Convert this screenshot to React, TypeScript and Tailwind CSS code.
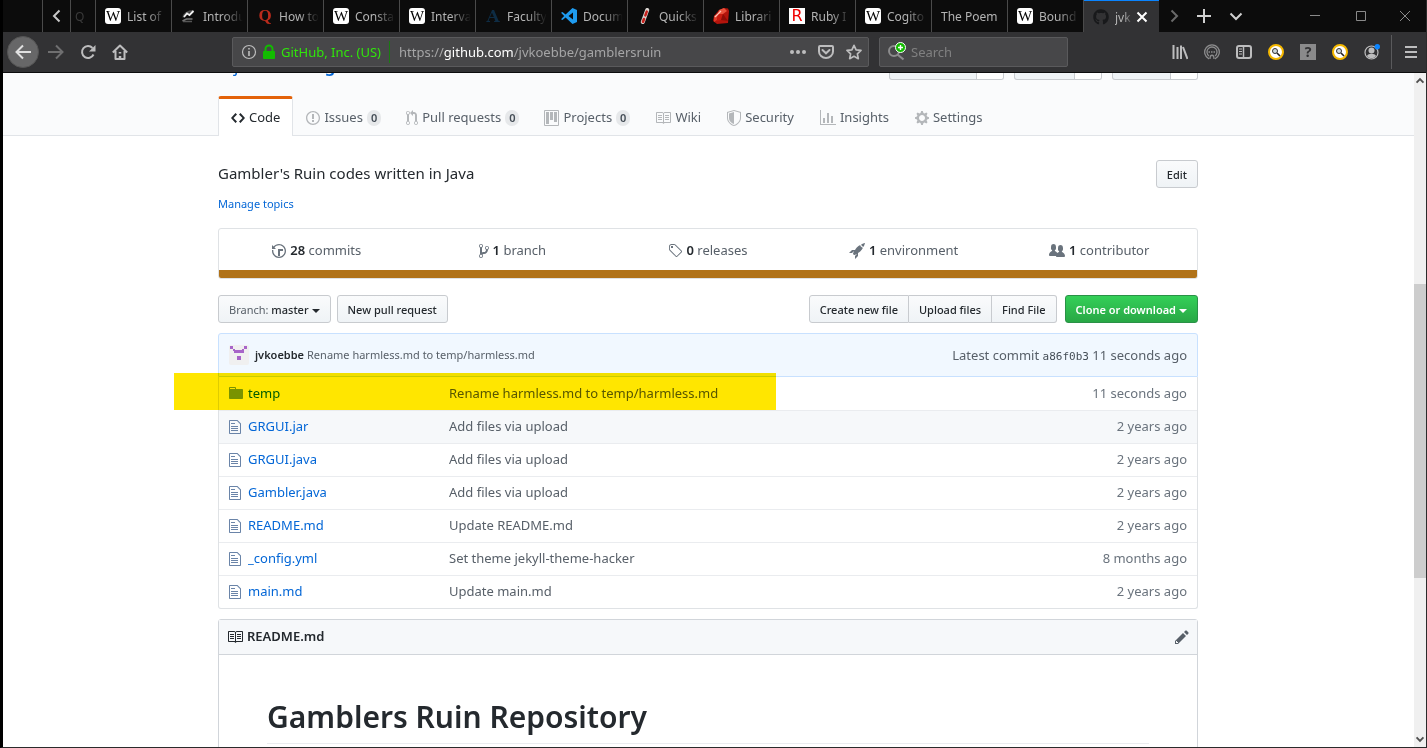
import React from 'react';
import { FaGithub } from 'react-icons/fa';

/* ---------- Octicons ---------- */

const octicons = {
  code: { w: 14, d: 'M9.5 3L8 4.5 11.5 8 8 11.5 9.5 13 14 8 9.5 3zm-5 0L0 8l4.5 5L6 11.5 2.5 8 6 4.5 4.5 3z' },
  issue: { w: 14, d: 'M7 2.3c3.14 0 5.7 2.56 5.7 5.7s-2.56 5.7-5.7 5.7A5.71 5.71 0 0 1 1.3 8c0-3.14 2.56-5.7 5.7-5.7zM7 1C3.14 1 0 4.14 0 8s3.14 7 7 7 7-3.14 7-7-3.14-7-7-7zm1 3H6v5h2V4zm0 6H6v2h2v-2z' },
  pull: { w: 12, d: 'M11 11.28V5c-.03-.78-.34-1.47-.94-2.06C9.46 2.35 8.78 2.03 8 2H7V0L4 3l3 3V4h1c.27.02.48.11.69.31.21.2.3.42.31.69v6.28A1.993 1.993 0 0 0 10 15a1.993 1.993 0 0 0 1-3.72zm-1 2.92c-.66 0-1.2-.55-1.2-1.2 0-.65.55-1.2 1.2-1.2.65 0 1.2.55 1.2 1.2 0 .65-.55 1.2-1.2 1.2zM4 3c0-1.11-.89-2-2-2a1.993 1.993 0 0 0-1 3.72v6.56A1.993 1.993 0 0 0 2 15a1.993 1.993 0 0 0 1-3.72V4.72c.59-.34 1-.98 1-1.72zm-.8 10c0 .66-.55 1.2-1.2 1.2-.65 0-1.2-.55-1.2-1.2 0-.65.55-1.2 1.2-1.2.65 0 1.2.55 1.2 1.2zM2 4.2C1.34 4.2.8 3.65.8 3c0-.65.55-1.2 1.2-1.2.65 0 1.2.55 1.2 1.2 0 .65-.55 1.2-1.2 1.2z' },
  project: { w: 15, d: 'M10 12h3V2h-3v10zm-4-2h3V2H6v8zm-4 4h3V2H2v12zm-1 1h13V1H1v14zM14 0H1a1 1 0 0 0-1 1v14a1 1 0 0 0 1 1h13a1 1 0 0 0 1-1V1a1 1 0 0 0-1-1z' },
  book: { w: 16, d: 'M3 5h4v1H3V5zm0 3h4V7H3v1zm0 2h4V9H3v1zm11-5h-4v1h4V5zm0 2h-4v1h4V7zm0 2h-4v1h4V9zm2-6v9c0 .55-.45 1-1 1H9.5l-1 1-1-1H2c-.55 0-1-.45-1-1V3c0-.55.45-1 1-1h5.5l1 1 1-1H15c.55 0 1 .45 1 1zm-8 .5L7.5 3H2v9h6V3.5zm7-.5H9.5l-.5.5V12h6V3z' },
  shield: { w: 14, d: 'M0 2l7-2 7 2v6.02C14 12.69 8.69 16 7 16c-1.69 0-7-3.31-7-7.98V2zm1 .75L7 1l6 1.75v5.268C13 12.104 8.449 15 7 15c-1.449 0-6-2.896-6-6.982V2.75zm1 .75L7 2v12c-1.207 0-5-2.482-5-5.985V3.5z' },
  graph: { w: 16, d: 'M16 14v1H0V0h1v14h15zM5 13H3V8h2v5zm4 0H7V3h2v10zm4 0h-2V6h2v7z' },
  gear: { w: 14, d: 'M14 8.77v-1.6l-1.94-.64-.45-1.09.88-1.84-1.13-1.13-1.81.91-1.09-.45-.69-1.92h-1.6l-.63 1.94-1.11.45-1.84-.88-1.13 1.13.91 1.81-.45 1.09L0 7.23v1.59l1.94.64.45 1.09-.88 1.84 1.13 1.13 1.81-.91 1.09.45.69 1.92h1.59l.63-1.94 1.11-.45 1.84.88 1.13-1.13-.92-1.81.47-1.09L14 8.75v.02zM7 11c-1.66 0-3-1.34-3-3s1.34-3 3-3 3 1.34 3 3-1.34 3-3 3z' },
  history: { w: 14, d: 'M8 13H6V6h5v2H8v5zM7 1C4.81 1 2.87 2.02 1.59 3.59L0 2v4h4L2.5 4.5C3.55 3.17 5.17 2.3 7 2.3c3.14 0 5.7 2.56 5.7 5.7s-2.56 5.7-5.7 5.7A5.71 5.71 0 0 1 1.3 8c0-.34.03-.67.09-1H.08C.03 7.33 0 7.66 0 8c0 3.86 3.14 7 7 7s7-3.14 7-7-3.14-7-7-7z' },
  branch: { w: 10, d: 'M10 5c0-1.11-.89-2-2-2a1.993 1.993 0 0 0-1 3.72v.3c-.02.52-.23.98-.63 1.38-.4.4-.86.61-1.38.63-.83.02-1.48.16-2 .45V4.72a1.993 1.993 0 0 0-1-3.72C.88 1 0 1.89 0 3a2 2 0 0 0 1 1.72v6.56c-.59.35-1 .99-1 1.72 0 1.11.89 2 2 2 1.11 0 2-.89 2-2 0-.53-.2-1-.53-1.36.09-.06.48-.41.59-.47.25-.11.56-.17.94-.17 1.05-.05 1.95-.45 2.75-1.25S8.95 7.77 9 6.73h-.02C9.59 6.37 10 5.73 10 5zM2 1.8c.66 0 1.2.55 1.2 1.2 0 .65-.55 1.2-1.2 1.2C1.35 4.2.8 3.65.8 3c0-.65.55-1.2 1.2-1.2zm0 12.41c-.66 0-1.2-.55-1.2-1.2 0-.65.55-1.2 1.2-1.2.65 0 1.2.55 1.2 1.2 0 .65-.55 1.2-1.2 1.2zm6-8c-.66 0-1.2-.55-1.2-1.2 0-.65.55-1.2 1.2-1.2.65 0 1.2.55 1.2 1.2 0 .65-.55 1.2-1.2 1.2z' },
  tag: { w: 14, d: 'M7.73 1.73C7.26 1.26 6.62 1 5.96 1H3.5C2.13 1 1 2.13 1 3.5v2.47c0 .66.27 1.3.73 1.77l6.06 6.06c.39.39 1.02.39 1.41 0l4.59-4.59a.996.996 0 0 0 0-1.41L7.73 1.73zM2.38 7.09c-.31-.3-.47-.7-.47-1.13V3.5c0-.88.72-1.59 1.59-1.59h2.47c.42 0 .83.16 1.13.47l6.14 6.13-4.73 4.73-6.13-6.15zM3.01 3h2v2H3V3h.01z' },
  rocket: { w: 16, d: 'M12.17 3.83c-.27-.27-.47-.55-.63-.88-.16-.31-.27-.66-.34-1.02-.58.33-1.16.7-1.73 1.13-.58.44-1.14.94-1.69 1.48-.7.7-1.33 1.81-1.78 2.45H3L0 10h3l2-2c-.34.77-1.02 2.98-1 3l1 1c.02.02 2.23-.64 3-1l-2 2v3l3-3v-3c.64-.45 1.75-1.09 2.45-1.78.55-.55 1.05-1.13 1.47-1.7.44-.58.81-1.16 1.14-1.72-.36-.08-.7-.19-1.03-.34a3.39 3.39 0 0 1-.86-.63zM16 0s-.09.38-.3 1.06c-.2.7-.55 1.58-1.06 2.66-.7-.08-1.27-.33-1.66-.72-.39-.39-.63-.94-.7-1.64C13.36.84 14.23.48 14.92.28 15.62.08 16 0 16 0z' },
  people: { w: 16, d: 'M16 12.999c0 .439-.45 1-1 1H7.995c-.539 0-.994-.447-.995-.999H1c-.54 0-1-.561-1-1 0-2.634 3-4 3-4s.229-.409 0-1c-.841-.621-1.058-.59-1-3 .058-2.419 1.367-3 2.5-3s2.442.58 2.5 3c.058 2.41-.159 2.379-1 3-.229.59 0 1 0 1s1.549.711 2.42 2.088C9.196 9.369 10 8.999 10 8.999s.229-.409 0-1c-.841-.62-1.058-.59-1-3 .058-2.419 1.367-3 2.5-3s2.437.581 2.495 3c.059 2.41-.158 2.38-1 3-.229.59 0 1 0 1s3.005 1.366 3.005 4' },
  file: { w: 12, d: 'M6 5H2V4h4v1zM2 8h7V7H2v1zm0 2h7V9H2v1zm0 2h7v-1H2v1zm10-7.5V14c0 .55-.45 1-1 1H1c-.55 0-1-.45-1-1V2c0-.55.45-1 1-1h7.5L12 4.5zM11 5L8 2H1v12h10V5z' },
  folder: { w: 14, d: 'M13 4H7V3c0-.66-.31-1-1-1H1c-.55 0-1 .45-1 1v10c0 .55.45 1 1 1h12c.55 0 1-.45 1-1V5c0-.55-.45-1-1-1zM6 4H1V3h5v1z' },
  pencil: { w: 14, d: 'M0 12v3h3l8-8-3-3-8 8zm3 2H1v-2h1v1h1v1zm10.3-9.3L12 6 9 3l1.3-1.3a.996.996 0 0 1 1.41 0l1.59 1.59c.39.39.39 1.02 0 1.41z' },
};
type OctName = keyof typeof octicons;

function Oct({ name, className = '' }: { name: OctName; className?: string }) {
  const { w, d } = octicons[name];
  return (
    <svg width={w} height={16} viewBox={`0 0 ${w} 16`} fill="currentColor" fillRule="evenodd" aria-hidden className={`shrink-0 ${className}`}>
      <path d={d} />
    </svg>
  );
}

/* ---------- Favicons ---------- */

function WikiIcon() {
  return (
    <span className="flex size-4 items-center justify-center overflow-hidden rounded-[3px] bg-white font-['Liberation_Serif',serif] text-[15px] leading-4 text-black">
      W
    </span>
  );
}

function LetterIcon({ letter, className }: { letter: string; className: string }) {
  return <span className={`flex size-4 items-center justify-center leading-4 ${className}`}>{letter}</span>;
}

function SketchIcon() {
  return (
    <svg width="16" height="16" viewBox="0 0 16 16" fill="none" aria-hidden>
      <path d="M2.500 9.500c0-3 4-6.500 10-6.500" stroke="#4c4c4c" strokeWidth="2" />
      <path d="M3 9l3-3.500 2.500 1.500 4-4" stroke="#f0f0f0" strokeWidth="1.800" />
      <path d="M1.500 13l4-2h6" stroke="#777" strokeWidth="1.600" />
      <path d="M2 13.500h9" stroke="#555" strokeWidth="1.500" />
    </svg>
  );
}

function VscodeIcon() {
  return (
    <svg width="16" height="16" viewBox="0 0 16 16" aria-hidden>
      <path d="M11.500 0L16 2v12l-4.500 2L4.600 9.600 1.500 12 0 11.300 3.200 8 0 4.700 1.500 4l3.100 2.400zM12 4.500L7.500 8l4.500 3.500z" fill="#1f9cf0" fillRule="evenodd" />
    </svg>
  );
}

function QuickIcon() {
  return (
    <svg width="16" height="16" viewBox="0 0 16 16" fill="none" strokeLinecap="round" aria-hidden>
      <path d="M10.200 2L5.800 14" stroke="#d9d4d0" strokeWidth="4" />
      <path d="M9.800 3.500L8.300 7.500" stroke="#c8201c" strokeWidth="2.400" />
      <path d="M7 11L6 13.700" stroke="#c8201c" strokeWidth="2.600" />
    </svg>
  );
}

function RubyIcon() {
  return (
    <svg width="16" height="16" viewBox="0 0 16 16" aria-hidden>
      <path d="M11 0l4 0.500 1 2.500-1 12-11 1-4-3 1-5 5-6z" fill="#b3140c" />
      <path d="M6 2l5-2 3 3-4 3-5 0z" fill="#e9513c" />
      <path d="M1 8l4-2-1 6-3 2z" fill="#e03a28" />
      <path d="M5 6l5 0-2 6-4 1z" fill="#c81c10" />
      <path d="M2 9l6-6" stroke="#ffc6b8" strokeWidth="1.200" />
      <path d="M10 6l5 7-7-1z" fill="#8e0c06" />
    </svg>
  );
}

const tabs: { icon: React.ReactNode; title: string }[] = [
  { icon: <WikiIcon />, title: 'List of' },
  { icon: <SketchIcon />, title: 'Introdu' },
  { icon: <LetterIcon letter="Q" className="font-['Liberation_Serif',serif] text-[17px] font-bold text-[#b92b1c]" />, title: 'How to' },
  { icon: <WikiIcon />, title: 'Consta' },
  { icon: <WikiIcon />, title: 'Interva' },
  { icon: <LetterIcon letter="A" className="font-['DejaVu_Serif',serif] text-[17px] font-bold text-[#0e2c44]" />, title: 'Faculty' },
  { icon: <VscodeIcon />, title: 'Docum' },
  { icon: <QuickIcon />, title: 'Quicks' },
  { icon: <RubyIcon />, title: 'Librari' },
  { icon: <LetterIcon letter="R" className="bg-white font-['DejaVu_Sans',sans-serif] text-[16px] text-[#f00000]" />, title: 'Ruby I' },
  { icon: <WikiIcon />, title: 'Cogito' },
  { icon: null, title: 'The Poem' },
  { icon: <WikiIcon />, title: 'Bound' },
];

const fade = '[mask-image:linear-gradient(to_right,black_50%,transparent)]';

function Line({ d, size = 16, width = 2, className = '' }: { d: string; size?: number; width?: number; className?: string }) {
  return (
    <svg width={size} height={size} viewBox="0 0 16 16" fill="none" stroke="currentColor" strokeWidth={width} className={`shrink-0 ${className}`} aria-hidden>
      <path d={d} />
    </svg>
  );
}

function TabStrip() {
  return (
    <div className="flex h-8 shrink-0 bg-[#0c0c0c] text-xs text-[#b4b4b4]">
      <div className="w-10 shrink-0 border-r border-[#4a4a4a]" />
      <button aria-label="Scroll tabs left" className="flex w-7 shrink-0 items-center justify-center border-r border-[#4a4a4a] text-[#c8c8c8]">
        <Line d="M10.500 2.500L5 8l5.500 5.500" />
      </button>
      <div className="w-[25px] shrink-0 border-r border-[#4a4a4a] pt-0.5 pl-1 leading-[30px] text-[#3a3a3a]">Q</div>
      {tabs.map((t) => (
        <button key={t.title} className="flex w-[76px] shrink items-center gap-1.5 border-r border-[#4a4a4a] pl-[9px] pr-1">
          {t.icon && <span className="shrink-0">{t.icon}</span>}
          <span className={`min-w-0 flex-1 overflow-hidden pt-0.5 whitespace-nowrap text-left ${t.icon ? fade : ''}`}>{t.title}</span>
        </button>
      ))}
      <div className="flex w-[75px] shrink-0 items-center border-t border-[#0a84ff] bg-[#323234] pl-[9px]">
        <FaGithub size={16} className="shrink-0 text-[#18191b]" />
        <span className={`ml-1.5 w-[18px] overflow-hidden pt-0.5 ${fade}`}>jvk</span>
        <button aria-label="Close tab" className="ml-px text-white">
          <Line d="M3.500 3.500l9 9M12.500 3.500l-9 9" />
        </button>
      </div>
      <button aria-label="Scroll tabs right" className="flex w-[30px] items-center justify-center text-[#6a6a6a]">
        <Line d="M5.500 2.500L11 8l-5.500 5.500" />
      </button>
      <button aria-label="New tab" className="flex w-[30px] items-center justify-center text-[#d0d0d0]">
        <Line d="M8 1v14M1 8h14" />
      </button>
      <button aria-label="List all tabs" className="flex w-[34px] items-center justify-center text-[#d0d0d0]">
        <Line d="M2.500 5.500L8 11l5.500-5.500" />
      </button>
      <div className="flex-1" />
      <div className="flex text-[#8a8a8a]">
        <button aria-label="Minimize" className="flex w-[46px] items-center justify-center"><Line d="M3 7.500h10" width={1} /></button>
        <button aria-label="Maximize" className="flex w-[46px] items-center justify-center"><Line d="M3.500 3.500h9v9h-9z" width={1} /></button>
        <button aria-label="Close" className="flex w-[42px] items-center justify-center"><Line d="M3 3l10 10M13 3L3 13" width={1} /></button>
      </div>
    </div>
  );
}

function Magnifier() {
  return (
    <svg width="16" height="16" viewBox="0 0 16 16" aria-hidden>
      <circle cx="8" cy="8" r="7" fill="#fff" stroke="#f5b800" strokeWidth="2" />
      <circle cx="7" cy="7" r="2.500" fill="#cfd8dc" stroke="#333" />
      <path d="M9 9l3 3" stroke="#222" strokeWidth="1.600" />
    </svg>
  );
}

function ToolButton({ label, children }: { label: string; children: React.ReactNode }) {
  return (
    <button aria-label={label} className="flex size-8 shrink-0 items-center justify-center">
      {children}
    </button>
  );
}

function Toolbar() {
  return (
    <div className="flex h-[41px] shrink-0 items-center border-b border-[#0c0c0d] bg-[#323234] pl-1 text-[13px] text-[#bdbdbe]">
      <button aria-label="Back" className="flex size-8 shrink-0 items-center justify-center rounded-full border border-[#555] bg-[#676768] text-[#e0e0e0]">
        <Line d="M16 8H1.500M8 1.500L1.500 8 8 14.500" />
      </button>
      <div className="flex shrink-0 pl-px">
        <ToolButton label="Forward"><Line d="M0 8h14.500M8 1.500L14.500 8 8 14.500" className="text-[#6f6f70]" /></ToolButton>
        <ToolButton label="Reload">
          <svg width="16" height="16" viewBox="0 0 16 16" fill="none" aria-hidden>
            <path d="M13.500 10.500A6 6 0 1 1 12.500 4" stroke="currentColor" strokeWidth="2" />
            <path d="M15.500 1v6.500H9z" fill="currentColor" />
          </svg>
        </ToolButton>
        <ToolButton label="Home">
          <svg width="16" height="16" viewBox="0 0 16 16" fill="none" stroke="currentColor" strokeWidth="2" aria-hidden>
            <path d="M0.800 8.500L8 1.500l7.200 7M3.500 7v8h9V7" strokeLinejoin="round" />
            <path d="M8 8v1.500M8 12v3" strokeWidth="2.500" />
          </svg>
        </ToolButton>
      </div>
      <div className="w-24 shrink" />

      <div className="flex h-[30px] min-w-0 flex-1 items-center rounded-[2px] border border-[#5a5a5c] bg-[#474749] pl-2 pr-1.5">
        <svg width="16" height="16" viewBox="0 0 16 16" fill="none" stroke="#bdbdbe" className="shrink-0" aria-hidden>
          <circle cx="8" cy="8" r="6.500" strokeWidth="1.200" />
          <path d="M8 7v5M8 4v1.600" strokeWidth="1.600" />
        </svg>
        <svg width="16" height="16" viewBox="0 0 16 16" className="ml-1 shrink-0" aria-hidden>
          <path d="M4.500 8V5a3.500 3.500 0 0 1 7 0v3" fill="none" stroke="#12bc00" strokeWidth="2" />
          <rect x="2" y="7" width="12" height="8" rx="1" fill="#12bc00" />
        </svg>
        <span className="ml-1 pt-0.5 whitespace-nowrap text-[#30e60b]">GitHub, Inc. (US)</span>
        <span className="ml-2 mr-[9px] h-[22px] w-px bg-[#1a7a12]" />
        <div role="textbox" aria-label="Address" contentEditable suppressContentEditableWarning className="min-w-0 flex-1 pt-0.5 whitespace-nowrap text-[#a5a5a6] outline-none">
          https://<span className="text-white">github.com</span>/jvkoebbe/gamblersruin
        </div>
        <div className="flex items-center gap-3">
          <button aria-label="Page actions">
            <svg width="16" height="16" viewBox="0 0 16 16" fill="currentColor" aria-hidden>
              <circle cx="2" cy="8" r="2" /><circle cx="8" cy="8" r="2" /><circle cx="14" cy="8" r="2" />
            </svg>
          </button>
          <button aria-label="Save to Pocket">
            <svg width="16" height="16" viewBox="0 0 16 16" fill="none" stroke="currentColor" strokeWidth="2" aria-hidden>
              <path d="M2 2h12a1 1 0 0 1 1 1v4.500a7 6.500 0 0 1-14 0V3a1 1 0 0 1 1-1z" />
              <path d="M4.500 6L8 9.300 11.500 6" strokeLinecap="round" />
            </svg>
          </button>
          <button aria-label="Bookmark this page">
            <svg width="16" height="16" viewBox="0 0 16 16" fill="none" stroke="currentColor" strokeWidth="1.700" strokeLinejoin="round" aria-hidden>
              <path d="M8 1.300l2.100 4.500 4.900.6-3.600 3.400.9 4.900L8 12.300l-4.300 2.400.9-4.900L1 6.400l4.900-.6z" />
            </svg>
          </button>
        </div>
      </div>

      <label className="ml-2.5 flex h-[30px] w-[189px] shrink items-center rounded-[2px] border border-[#5a5a5c] bg-[#474749] pl-2">
        <svg width="20" height="20" viewBox="0 0 20 20" fill="none" className="shrink-0" aria-hidden>
          <circle cx="6" cy="9" r="5" stroke="#8c8c8d" strokeWidth="2" />
          <path d="M9.500 12.500l6 5" stroke="#8c8c8d" strokeWidth="2.200" />
          <circle cx="12.500" cy="5.500" r="5" fill="#12bc00" stroke="#fff" />
          <path d="M12.500 3v5M10 5.500h5" stroke="#fff" strokeWidth="1.400" />
        </svg>
        <input aria-label="Search" placeholder="Search" className="ml-[3px] w-full min-w-0 bg-transparent pt-0.5 outline-none placeholder:text-[#808081]" />
      </label>
      <div className="w-24 shrink" />

      <ToolButton label="Library">
        <svg width="16" height="16" viewBox="0 0 16 16" stroke="currentColor" strokeWidth="2" aria-hidden>
          <path d="M1.500 1v14M5.500 3v12M9 1.500v13.500" /><path d="M11 3l4.500 12" />
        </svg>
      </ToolButton>
      <ToolButton label="Extension">
        <svg width="16" height="16" viewBox="0 0 16 16" fill="none" stroke="#8c8c8d" strokeWidth="1.300" aria-hidden>
          <path d="M5 14.800a7.300 7.300 0 1 1 6 0M5 12a5 5 0 1 1 6 0" />
          <path d="M4.500 8h7" strokeWidth="1.600" strokeDasharray="1.500 1" /><path d="M6 15c0-5 4-5 4 0" />
        </svg>
      </ToolButton>
      <ToolButton label="Sidebars">
        <svg width="16" height="16" viewBox="0 0 16 16" fill="none" stroke="currentColor" aria-hidden>
          <rect x="1" y="2" width="14" height="12" rx="2" strokeWidth="2" />
          <path d="M7.500 2v12" strokeWidth="1.500" /><path d="M3 5h3M3 7.500h3M3 10h3" />
        </svg>
      </ToolButton>
      <ToolButton label="Zoom tool"><Magnifier /></ToolButton>
      <ToolButton label="Help">
        <span className="flex size-4 items-center justify-center bg-[#8a8a8b] text-sm leading-4 font-bold text-[#323234]">?</span>
      </ToolButton>
      <ToolButton label="Zoom tool two"><Magnifier /></ToolButton>
      <ToolButton label="Account">
        <svg width="16" height="16" viewBox="0 0 16 16" fill="none" aria-hidden>
          <circle cx="7.500" cy="8.500" r="6.500" stroke="currentColor" strokeWidth="1.200" />
          <circle cx="7.500" cy="6.500" r="3" fill="currentColor" /><path d="M3 12c1-3 8-3 9 0-2 3-7 3-9 0z" fill="currentColor" />
          <circle cx="13.300" cy="2.700" r="2.700" fill="#0a84ff" />
        </svg>
      </ToolButton>
      <span className="ml-[3px] h-[34px] w-px bg-[#5a5a5c]" />
      <button aria-label="Menu" className="flex h-8 w-[34px] shrink-0 items-center justify-center pl-1">
        <Line d="M2 3h12M2 8h12M2 13h12" />
      </button>
    </div>
  );
}

/* ---------- Repository page ---------- */

const navItems: { icon: OctName; label: string; count?: number }[] = [
  { icon: 'issue', label: 'Issues', count: 0 },
  { icon: 'pull', label: 'Pull requests', count: 0 },
  { icon: 'project', label: 'Projects', count: 0 },
  { icon: 'book', label: 'Wiki' },
  { icon: 'shield', label: 'Security' },
  { icon: 'graph', label: 'Insights' },
  { icon: 'gear', label: 'Settings' },
];

function SocialButton({ label, className }: { label: string; className: string }) {
  return (
    <div className={`flex rounded-b-[3px] border border-t-0 border-[#c8cbcf] bg-[#eff3f6] ${className}`}>
      <button aria-label={label} className="flex-1" />
      <a href="#" aria-label={`${label} count`} className="w-[27px] rounded-br-[2px] border-l border-[#c8cbcf] bg-white" />
    </div>
  );
}

function RepoHeader() {
  return (
    <header className="border-b border-[#e1e4e8] bg-[#fafbfc] pr-px">
      <div className="mx-auto flex w-[980px] max-w-full flex-col">
        <div className="flex h-[7px] justify-between">
          <div className="flex h-1 items-end overflow-hidden pl-4 text-[17px] leading-[22px] text-[#0366d6]">
            <a href="#">jvkoebbe</a>
            <span className="px-1.5 text-[#586069]">/</span>
            <a href="#" className="font-semibold">gamblersruin</a>
          </div>
          <div className="flex gap-2.5">
            <SocialButton label="Watch" className="w-[115px]" />
            <SocialButton label="Star" className="w-[88px]" />
            <SocialButton label="Fork" className="w-[86px]" />
          </div>
        </div>
        <nav className="-mb-px mt-4 flex h-10 items-stretch text-[13px] text-[#586069]">
          <a href="#" className="flex items-center gap-1 rounded-t-[3px] border-x border-t-3 border-x-[#e1e4e8] border-t-[#e36209] bg-white px-3 text-[#24292e]">
            <Oct name="code" />
            Code
          </a>
          {navItems.map((n) => (
            <a key={n.label} href="#" className={`flex items-center gap-1 pt-[3px] ${n.count === undefined ? 'px-[13px]' : 'pl-[13px] pr-3'}`}>
              <Oct name={n.icon} className="text-[#b4b7ba]" />
              {n.label}
              {n.count !== undefined && (
                <span className="rounded-full bg-[#e6e8ea] px-1 text-[11px] leading-4 font-semibold text-[#444d56]">{n.count}</span>
              )}
            </a>
          ))}
        </nav>
      </div>
    </header>
  );
}

const stats: { icon: OctName; n: number; label: string }[] = [
  { icon: 'history', n: 28, label: 'commits' },
  { icon: 'branch', n: 1, label: 'branch' },
  { icon: 'tag', n: 0, label: 'releases' },
  { icon: 'rocket', n: 1, label: 'environment' },
  { icon: 'people', n: 1, label: 'contributor' },
];

const files: { name: string; message: string; age: string; dir?: boolean }[] = [
  { name: 'temp', message: 'Rename harmless.md to temp/harmless.md', age: '11 seconds ago', dir: true },
  { name: 'GRGUI.jar', message: 'Add files via upload', age: '2 years ago' },
  { name: 'GRGUI.java', message: 'Add files via upload', age: '2 years ago' },
  { name: 'Gambler.java', message: 'Add files via upload', age: '2 years ago' },
  { name: 'README.md', message: 'Update README.md', age: '2 years ago' },
  { name: '_config.yml', message: 'Set theme jekyll-theme-hacker', age: '8 months ago' },
  { name: 'main.md', message: 'Update main.md', age: '2 years ago' },
];

const btn =
  'h-7 border border-[#c8cbcf] bg-linear-to-b from-[#fafbfc] to-[#eff3f6] px-2.5 pt-0.5 text-[11px] font-medium text-[#24292e] whitespace-nowrap';

function Caret() {
  return (
    <svg width="8" height="4" viewBox="0 0 8 4" fill="currentColor" className="ml-[3px] inline-block align-middle" aria-hidden>
      <path d="M0 0h8L4 4z" />
    </svg>
  );
}

function Avatar() {
  return (
    <svg width="20" height="20" viewBox="0 0 20 20" aria-hidden>
      <rect width="20" height="20" rx="2" fill="#f0f0f0" />
      <path d="M1 1h3v3H1zM15 1h3v3h-3zM4 4h2v2H4zM13 4h2v2h-2zM5 5h10v3H5zM8 11h4v4H8z" fill="#a865c9" />
    </svg>
  );
}

function FileBrowser() {
  return (
    <section className="relative mt-2.5">
      <div className="flex h-11 items-center rounded-t-[3px] border border-[#c8e1ff] bg-[#f1f8ff] px-2.5 text-[#586069]">
        <Avatar />
        <a href="#" className="ml-1.5 text-[11px] font-semibold text-[#24292e]">jvkoebbe</a>
        <a href="#" className="ml-[3px] text-[11px]">Rename harmless.md to temp/harmless.md</a>
        <span className="ml-auto pt-0.5 text-[13px]">
          Latest commit <a href="#" className="font-['DejaVu_Sans_Mono',monospace] text-[11px] text-[#444d56]">a86f0b3</a> 11 seconds ago
        </span>
      </div>
      <div className="overflow-hidden rounded-b-[3px] border border-t-0 border-[#dfe2e5]">
        <table className="w-full table-fixed border-collapse text-left text-[13px] text-[#586069]">
          <tbody>
            {files.map((f, i) => (
              <tr key={f.name} className={`h-[33px] ${i > 0 ? 'border-t border-[#eaecef]' : ''} ${i === 1 ? 'bg-[#f6f8fa]' : ''}`}>
                <td className="w-[29px] pl-2.5">
                  <Oct name={f.dir ? 'folder' : 'file'} className={f.dir ? 'text-[#79a3cf]' : 'text-[#6a84a8]'} />
                </td>
                <td className="w-[201px]">
                  <a href="#" className="text-[#0366d6]">{f.name}</a>
                </td>
                <td>{f.message}</td>
                <td className="w-36 pr-2.5 text-right text-[#6a737d]">{f.age}</td>
              </tr>
            ))}
          </tbody>
        </table>
      </div>
      <div className="pointer-events-none absolute -left-11 top-10 h-[37px] w-[602px] bg-[#ffe600] mix-blend-multiply" />
    </section>
  );
}

function RepoPage() {
  return (
    <main className="pr-px">
      <div className="mx-auto w-[980px] max-w-full">
        <div className="flex items-start justify-between pt-6">
          <p className="text-[15px] leading-[26px] text-[#24292e]">Gambler's Ruin codes written in Java</p>
          <button className={`${btn} rounded-[3px]`}>Edit</button>
        </div>
        <a href="#" className="mt-1.5 block w-fit text-[11px] leading-5 text-[#0366d6]">Manage topics</a>

        <div className="mt-3.5 overflow-hidden rounded-[3px] border border-[#dfe2e5]">
          <ul className="grid h-[41px] grid-cols-5 text-[13px] text-[#586069]">
            {stats.map((s) => (
              <li key={s.label}>
                <a href="#" className="flex h-full items-center justify-center gap-1 pt-0.5">
                  <Oct name={s.icon} className="text-[#6a737d]" />
                  <span><span className="font-semibold text-[#24292e]">{s.n}</span> {s.label}</span>
                </a>
              </li>
            ))}
          </ul>
          <div className="h-2 bg-[#b07219]" />
        </div>

        <div className="mt-4 flex items-center">
          <button className={`${btn} rounded-[3px]`}>
            <span className="font-normal text-[#586069]">Branch:</span> master
            <Caret />
          </button>
          <button className={`${btn} ml-1.5 rounded-[3px]`}>New pull request</button>
          <div className="ml-auto flex">
            <button className={`${btn} rounded-l-[3px]`}>Create new file</button>
            <button className={`${btn} border-l-0`}>Upload files</button>
            <button className={`${btn} rounded-r-[3px] border-l-0`}>Find File</button>
          </div>
          <button className="ml-2 h-7 rounded-[3px] border border-[#2a9147] bg-linear-to-b from-[#34d058] to-[#28a745] px-2.5 pt-0.5 text-[11px] font-semibold whitespace-nowrap text-white">
            Clone or download
            <Caret />
          </button>
        </div>

        <FileBrowser />

        <section className="mt-2.5 rounded-t-[3px] border border-[#d1d5da]">
          <div className="flex h-[35px] items-center border-b border-[#d1d5da] bg-[#f6f8fa] px-2">
            <Oct name="book" className="text-[#24292e]" />
            <h2 className="ml-1 text-[13px] font-semibold text-[#24292e]">README.md</h2>
            <button aria-label="Edit this file" className="ml-auto text-[#586069]"><Oct name="pencil" /></button>
          </div>
          <div className="px-12 pt-10 pb-12">
            <h1 className="border-b border-[#eaecef] pt-0.5 pb-1.5 text-[30px] leading-10 font-semibold text-[#24292e]">Gamblers Ruin Repository</h1>
          </div>
        </section>
      </div>
    </main>
  );
}

function Scrollbar() {
  return (
    <div className="flex w-3 shrink-0 flex-col bg-[#f0f0f0] text-[#505050]" aria-hidden>
      <div className="flex h-4 items-center justify-center"><Line d="M2.500 10.500L8 5l5.500 5.500" size={10} width={3} /></div>
      <div className="flex-[195]" />
      <div className="flex-[294] bg-[#cdcdcd]" />
      <div className="flex-[153]" />
      <div className="flex h-4 items-center justify-center"><Line d="M2.500 5.500L8 11l5.500-5.500" size={10} width={3} /></div>
    </div>
  );
}

export default function App() {
  return (
    <div className="flex h-screen flex-col overflow-hidden border-r border-b border-l-3 border-r-[#2b2b2b] border-b-[#2b2b2b] border-l-black bg-white font-['Noto_Sans','Open_Sans',sans-serif]">
      <TabStrip />
      <Toolbar />
      <div className="flex min-h-0 flex-1">
        <div className="min-w-0 flex-1 overflow-hidden">
          <RepoHeader />
          <RepoPage />
        </div>
        <Scrollbar />
      </div>
    </div>
  );
}
